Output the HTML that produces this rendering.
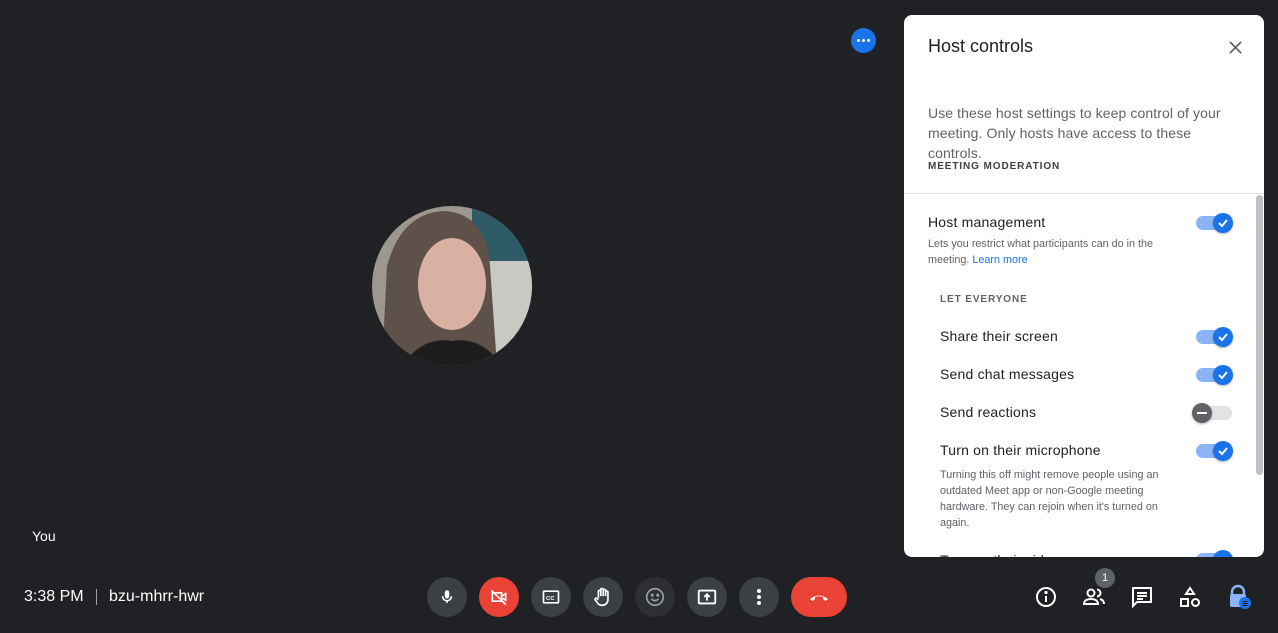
<!DOCTYPE html>
<html><head><meta charset="utf-8"><style>
*{margin:0;padding:0;box-sizing:border-box}
body{width:1278px;height:633px;background:#202124;font-family:"Liberation Sans",sans-serif;position:relative;overflow:hidden;color:#fff}
.abs{position:absolute}
.btn{position:absolute;top:577px;width:40px;height:40px;border-radius:50%;background:#3c4043;display:flex;align-items:center;justify-content:center}
.panel{position:absolute;left:904px;top:15px;width:360px;height:542px;background:#fff;border-radius:8px;overflow:hidden;color:#202124}
.tog{position:absolute;left:292px;width:36px;height:14px;border-radius:7px;background:#8ab4f8}
.tog .k{position:absolute;right:-1px;top:-3px;width:20px;height:20px;border-radius:50%;background:#1a73e8;box-shadow:0 1px 2px rgba(0,0,0,.3);display:flex;align-items:center;justify-content:center}
.lbl{position:absolute;left:36px;font-size:14px;color:#202124;letter-spacing:.2px}
.sm{position:absolute;font-size:10.8px;color:#5f6368;line-height:16px}
</style></head><body>
<div class="abs" style="left:851px;top:28px;width:25px;height:25px;border-radius:50%;background:#1a73e8;display:flex;align-items:center;justify-content:center;gap:2px"><i style="width:3px;height:3px;background:#fff;border-radius:50%"></i><i style="width:3px;height:3px;background:#fff;border-radius:50%"></i><i style="width:3px;height:3px;background:#fff;border-radius:50%"></i></div>

<svg class="abs" style="left:372px;top:206px" width="160" height="160" viewBox="0 0 160 160">
<defs><clipPath id="c"><circle cx="80" cy="80" r="80"/></clipPath></defs>
<g clip-path="url(#c)">
<rect width="160" height="160" fill="#9c9890"/>
<rect x="100" y="0" width="60" height="60" fill="#2f5b66"/>
<rect x="110" y="55" width="50" height="105" fill="#c9c9c4"/>
<path d="M10 160 L15 60 Q30 5 75 5 Q115 10 118 60 L125 160Z" fill="#5e5149"/>
<ellipse cx="80" cy="78" rx="34" ry="46" fill="#d9b1a2"/>
<path d="M40 60 Q50 15 80 12 Q110 15 115 55 Q100 30 80 28 Q55 30 40 60Z" fill="#5e5149"/>
<path d="M30 160 Q50 130 80 135 Q110 130 130 160Z" fill="#1d1d1d"/>
</g></svg>

<div class="abs" style="left:32px;top:528px;font-size:14px">You</div>
<div class="abs" style="left:24px;top:588px;font-size:16px">3:38 PM</div>
<div class="abs" style="left:96px;top:589px;width:1px;height:16px;background:#9aa0a6"></div>
<div class="abs" style="left:109px;top:588px;font-size:16px">bzu-mhrr-hwr</div>

<div class="btn" style="left:427px"><svg width="18" height="18" viewBox="0 0 24 24" fill="#fff"><rect x="9" y="3" width="6" height="11" rx="3"/><path d="M6 11a6 6 0 0 0 12 0" stroke="#fff" stroke-width="2" fill="none"/><rect x="11" y="16" width="2" height="4"/></svg></div>
<div class="btn" style="left:479px;background:#ea4335"><svg width="20" height="20" viewBox="0 0 24 24" fill="none" stroke="#fff" stroke-width="2"><rect x="4" y="7" width="11" height="10"/><path d="M15 11l5-3v8l-5-3"/><path d="M3 4l17 17"/></svg></div>
<div class="btn" style="left:531px"><svg width="20" height="20" viewBox="0 0 24 24" fill="none" stroke="#fff" stroke-width="2"><rect x="3" y="5" width="18" height="14" rx="1"/><text x="6" y="15.5" font-size="7" fill="#fff" stroke="none" font-family="Liberation Sans" font-weight="bold">CC</text></svg></div>
<div class="btn" style="left:583px"><svg width="22" height="22" viewBox="0 0 24 24" fill="none" stroke="#fff" stroke-width="1.8"><path d="M7 13V6a1.3 1.3 0 0 1 2.6 0v5M9.6 11V4a1.3 1.3 0 0 1 2.6 0v7M12.2 11V5a1.3 1.3 0 0 1 2.6 0v6M14.8 11V7a1.3 1.3 0 0 1 2.6 0v8a6 6 0 0 1-6 6h-1a5 5 0 0 1-4-2l-3-4a1.3 1.3 0 0 1 2-1.5L7 15"/></svg></div>
<div class="btn" style="left:635px;background:#2d2f32"><svg width="22" height="22" viewBox="0 0 24 24" fill="none" stroke="#9aa0a6" stroke-width="1.8"><circle cx="12" cy="12" r="9"/><circle cx="9" cy="10" r=".8" fill="#9aa0a6"/><circle cx="15" cy="10" r=".8" fill="#9aa0a6"/><path d="M8 14q4 4 8 0"/></svg></div>
<div class="btn" style="left:687px"><svg width="22" height="22" viewBox="0 0 24 24" fill="none" stroke="#fff" stroke-width="2"><rect x="3" y="5" width="18" height="14" rx="1"/><path d="M12 16V10M9 12l3-3 3 3"/></svg></div>
<div class="btn" style="left:739px"><svg width="4" height="16" viewBox="0 0 4 16" fill="#fff"><circle cx="2" cy="2" r="2"/><circle cx="2" cy="8" r="2"/><circle cx="2" cy="14" r="2"/></svg></div>
<div class="btn" style="left:791px;width:56px;border-radius:20px;background:#ea4335"><svg width="24" height="24" viewBox="0 0 24 24" fill="#fff"><path d="M3 14q9-7 18 0l-2.5 2-2.5-2v-2q-4-1.5-8 0v2l-2.5 2z"/></svg></div>

<svg class="abs" style="left:1034px;top:585px" width="24" height="24" viewBox="0 0 24 24" fill="none" stroke="#fff" stroke-width="2"><circle cx="12" cy="12" r="9"/><path d="M12 11v6"/><circle cx="12" cy="7.5" r=".6" fill="#fff"/></svg>
<div class="abs" style="left:1095px;top:568px;width:20px;height:20px;border-radius:50%;background:#5f6368;font-size:11px;display:flex;align-items:center;justify-content:center">1</div>
<svg class="abs" style="left:1082px;top:585px" width="24" height="24" viewBox="0 0 24 24" fill="none" stroke="#fff" stroke-width="2"><circle cx="9" cy="8" r="3.5"/><path d="M2 19c0-4 4-5 7-5s7 1 7 5z"/><path d="M15 4.5a3.5 3.5 0 0 1 0 7M18 14c2 .6 4 2 4 5"/></svg>
<svg class="abs" style="left:1130px;top:585px" width="24" height="24" viewBox="0 0 24 24" fill="none" stroke="#fff" stroke-width="2"><path d="M3 3h18v14H7l-4 4z"/><path d="M7 8h10M7 11h10M7 14h6"/></svg>
<svg class="abs" style="left:1178px;top:585px" width="24" height="24" viewBox="0 0 24 24" fill="none" stroke="#fff" stroke-width="2"><path d="M12 3l4 6H8z"/><rect x="3" y="14" width="7" height="7"/><circle cx="17.5" cy="17.5" r="3.5"/></svg>
<svg class="abs" style="left:1226px;top:584px" width="26" height="26" viewBox="0 0 26 26"><path d="M6 10V8a6 6 0 0 1 12 0v2" fill="none" stroke="#8ab4f8" stroke-width="2.4"/><rect x="4" y="10" width="16" height="13" rx="2" fill="#8ab4f8"/><circle cx="19" cy="19" r="6" fill="#1a73e8"/><path d="M16.5 17.5h5M16.5 19.5h5M16.5 21.5h5" stroke="#202124" stroke-width="1"/></svg>

<div class="panel">
<div class="abs" style="left:24px;top:21px;font-size:18px;color:#202124">Host controls</div>
<svg class="abs" style="left:324px;top:25px" width="15" height="15" viewBox="0 0 16 16" stroke="#5f6368" stroke-width="1.8"><path d="M2 2l12 12M14 2L2 14"/></svg>
<div class="abs" style="left:24px;top:88px;width:315px;font-size:14px;line-height:20px;color:#5f6368;letter-spacing:.1px">Use these host settings to keep control of your meeting. Only hosts have access to these controls.</div>
<div class="abs" style="left:24px;top:146px;font-size:10px;font-weight:bold;letter-spacing:.9px;color:#3c4043">MEETING MODERATION</div>
<div class="abs" style="left:0;top:178px;width:360px;height:1px;background:#e0e0e0"></div>
<div class="abs" style="left:352px;top:180px;width:7px;height:280px;border-radius:4px;background:#bdc1c6"></div>

<div class="lbl" style="left:24px;top:199px">Host management</div>
<div class="sm" style="left:24px;top:221px;width:255px">Lets you restrict what participants can do in the meeting. <span style="color:#1a73e8">Learn more</span></div>
<div class="tog" style="top:201px"><div class="k"><svg width="12" height="12" viewBox="0 0 12 12" fill="none" stroke="#fff" stroke-width="2"><path d="M2 6l3 3 5-6"/></svg></div></div>

<div class="abs" style="left:36px;top:279px;font-size:10px;font-weight:bold;letter-spacing:.9px;color:#5f6368">LET EVERYONE</div>

<div class="lbl" style="top:313px">Share their screen</div>
<div class="tog" style="top:315px"><div class="k"><svg width="12" height="12" viewBox="0 0 12 12" fill="none" stroke="#fff" stroke-width="2"><path d="M2 6l3 3 5-6"/></svg></div></div>
<div class="lbl" style="top:351px">Send chat messages</div>
<div class="tog" style="top:353px"><div class="k"><svg width="12" height="12" viewBox="0 0 12 12" fill="none" stroke="#fff" stroke-width="2"><path d="M2 6l3 3 5-6"/></svg></div></div>
<div class="lbl" style="top:389px">Send reactions</div>
<div class="tog" style="top:391px;background:#e3e3e3"><div class="k" style="left:-4px;right:auto;background:#5f6368"><i style="width:10px;height:2px;background:#fff;display:block"></i></div></div>
<div class="lbl" style="top:427px">Turn on their microphone</div>
<div class="tog" style="top:429px"><div class="k"><svg width="12" height="12" viewBox="0 0 12 12" fill="none" stroke="#fff" stroke-width="2"><path d="M2 6l3 3 5-6"/></svg></div></div>
<div class="sm" style="left:36px;top:452px;width:240px">Turning this off might remove people using an outdated Meet app or non-Google meeting hardware. They can rejoin when it's turned on again.</div>
<div class="lbl" style="top:537px">Turn on their video</div>
<div class="tog" style="top:538px"><div class="k"></div></div>
</div>
</body></html>
